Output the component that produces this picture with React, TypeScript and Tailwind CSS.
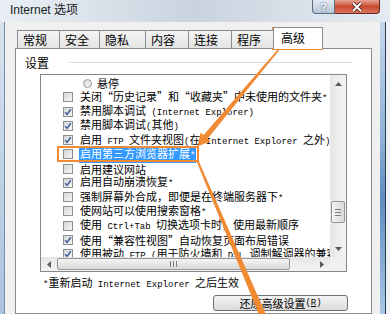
import React from "react";

type Row = { s: string; c?: boolean; radio?: boolean; sel?: boolean };

const rows: Row[] = [
  { s: "悬停", radio: true },
  { s: "关闭“历史记录”和“收藏夹”中未使用的文件夹*" },
  { s: "禁用脚本调试 (Internet Explorer)", c: true },
  { s: "禁用脚本调试(其他)", c: true },
  { s: "启用 FTP 文件夹视图(在 Internet Explorer 之外)", c: true },
  { s: "启用第三方浏览器扩展*", sel: true },
  { s: "启用建议网站" },
  { s: "启用自动崩溃恢复*", c: true },
  { s: "强制屏幕外合成，即便是在终端服务器下*" },
  { s: "使网站可以使用搜索窗格*" },
  { s: "使用 Ctrl+Tab 切换选项卡时，使用最新顺序" },
  { s: "使用“兼容性视图”自动恢复页面布局错误", c: true },
  { s: "使用被动 FTP (用于防火墙和 DSL 调制解调器的兼容性)", c: true },
];

const tabs = [
  { t: "常规", w: "w-[43px]" },
  { t: "安全", w: "w-[41px]" },
  { t: "隐私", w: "w-[47px]" },
  { t: "内容", w: "w-[44px]" },
  { t: "连接", w: "w-[44px]" },
  { t: "程序", w: "w-[43px]" },
];

// ascii runs get the narrow mono face, like SimSun's half-width latin
function T({ s }: { s: string }) {
  const parts = s.split(/([\x20-\x7e]+)/);
  return (
    <>
      {parts.map((p, i) =>
        /^[\x20-\x7e]+$/.test(p) ? (
          <span key={i} className="font-['Liberation_Mono',monospace] text-[9px] whitespace-pre">
            {p}
          </span>
        ) : (
          <React.Fragment key={i}>{p}</React.Fragment>
        )
      )}
    </>
  );
}

function Check({ on }: { on?: boolean }) {
  return (
    <span className="w-[10px] h-[10px] shrink-0 border border-[#8e8f8f] bg-gradient-to-br from-[#d4d6d9] to-[#f6f6f6] flex items-center justify-center">
      {on && (
        <svg width="8" height="8" viewBox="0 0 8 8">
          <path d="M1.2 4.2 L3.1 6.4 L6.8 1.2" stroke="#3e5d9e" strokeWidth="1.5" fill="none" />
        </svg>
      )}
    </span>
  );
}

function Tri({ dir }: { dir: "up" | "down" | "left" | "right" }) {
  const pts = {
    up: "0,4 3.5,0 7,4",
    down: "0,0 3.5,4 7,0",
    left: "4,0 0,3.5 4,7",
    right: "0,0 4,3.5 0,7",
  }[dir];
  const vert = dir === "up" || dir === "down";
  return (
    <svg width={vert ? 7 : 4} height={vert ? 4 : 7} viewBox={vert ? "0 0 7 4" : "0 0 4 7"}>
      <polygon points={pts} fill="#5a5a5a" />
    </svg>
  );
}

export default function App() {
  return (
    <div className="relative w-[390px] h-[314px] overflow-hidden flex flex-col bg-[#dce5ee] font-['Noto_Sans_CJK_SC',sans-serif] text-black">
      {/* title bar */}
      <div className="h-[22px] shrink-0 flex items-start pl-[10px] pr-[10px] bg-[linear-gradient(to_right,#e9eff5,#d6dfe8_30%,#c9d3de_50%,#d8e0e9_75%,#e3eaf1)]">
        <span className="mt-[3px] text-[12px] leading-[14px] font-['Liberation_Sans','Noto_Sans_CJK_SC',sans-serif] text-[#1b1b1b]">
          Internet 选项
        </span>
        <div className="flex-1" />
        <div className="w-[23px] h-[14px] border border-t-0 border-[#5b6e83] rounded-bl-[4px] bg-gradient-to-b from-[#e3eaf2] to-[#b5c5d6] flex items-center justify-center text-[11px] leading-[12px] font-bold text-white font-['Liberation_Sans',sans-serif] [text-shadow:0_0_2px_#1d3957]">
          ?
        </div>
        <div className="w-[45px] h-[14px] border border-t-0 border-l-0 border-[#6b2a20] rounded-br-[4px] bg-gradient-to-b from-[#e6a293] via-[#c9472f] to-[#da7560] flex items-center justify-center">
          <svg width="12" height="10" viewBox="0 0 12 10">
            <path d="M2 1 L10 9 M10 1 L2 9" stroke="#3a1510" strokeWidth="3.4" />
            <path d="M2 1 L10 9 M10 1 L2 9" stroke="#ffffff" strokeWidth="2" />
          </svg>
        </div>
      </div>

      <div className="flex flex-1 min-h-0">
        <div className="w-[4px] bg-gradient-to-b from-[#d7e3ef] to-[#a9c3de]" />
        <div className="w-px bg-[#7a8ea3]" />

        {/* client */}
        <div className="flex-1 bg-[#f0f0f0] pl-[10px] pr-[8px] pt-[5px] flex flex-col">
          <div className="h-[22px] -mb-px ml-[2px] flex items-end relative z-10 text-[12px]">
            {tabs.map((t) => (
              <div
                key={t.t}
                className={`${t.w} h-[18px] mb-px -mr-px border border-b-0 border-[#898c95] bg-gradient-to-b from-[#f4f4f4] to-[#e4e4e4] pl-[5px] leading-[17px]`}
              >
                {t.t}
              </div>
            ))}
            <div className="w-[50px] h-[22px] bg-white border border-b-0 border-[#898c95] pl-[7px] pt-[2px] leading-[16px]">
              高级
            </div>
          </div>

          <div className="flex-1 bg-white border border-[#898c95] flex flex-col">
            <div className="mt-[7px] ml-[9px] mr-[19px] h-[13px] flex items-center">
              <span className="text-[12px] leading-[13px]">设置</span>
              <div className="ml-[20px] flex-1 h-px bg-[#d5dfe5]" />
            </div>

            <div className="mt-[5px] ml-[24px] w-[307px] h-[198px] border border-[#828790] bg-white grid grid-cols-[1fr_16px] grid-rows-[1fr_14px]">
              <div className="overflow-hidden pt-px text-[11px]">
                {rows.map((r, i) => (
                  <div key={i} className="h-[14.25px] flex items-center whitespace-nowrap leading-[14px]">
                    {r.radio ? (
                      <>
                        <span className="ml-[42px] w-[9px] h-[9px] rounded-full border border-[#9a9a9a] bg-gradient-to-br from-[#d8d9db] to-[#f7f7f7]" />
                        <span className="ml-[5px]">
                          <T s={r.s} />
                        </span>
                      </>
                    ) : (
                      <>
                        <span className="ml-[22px]">
                          <Check on={r.c} />
                        </span>
                        <span className={r.sel ? "ml-[6px] px-px bg-[#3399ff] text-white" : "ml-[7px]"}>
                          <T s={r.s} />
                        </span>
                      </>
                    )}
                  </div>
                ))}
              </div>

              {/* vertical scrollbar */}
              <div className="flex flex-col bg-gradient-to-r from-[#e6e6e6] to-[#f4f4f4]">
                <div className="h-[17px] flex items-center justify-center">
                  <Tri dir="up" />
                </div>
                <div className="h-[109px]" />
                <div className="h-[22px] mx-px border border-[#979797] rounded-[2px] bg-gradient-to-r from-[#f4f4f4] to-[#d9d9d9] flex flex-col items-center justify-center gap-[2px]">
                  <div className="w-[6px] h-px bg-[#7d7d7d]" />
                  <div className="w-[6px] h-px bg-[#7d7d7d]" />
                  <div className="w-[6px] h-px bg-[#7d7d7d]" />
                </div>
                <div className="flex-1" />
                <div className="h-[17px] flex items-center justify-center">
                  <Tri dir="down" />
                </div>
              </div>

              {/* horizontal scrollbar */}
              <div className="flex bg-gradient-to-b from-[#e6e6e6] to-[#f4f4f4]">
                <div className="w-[16px] flex items-center justify-center">
                  <Tri dir="left" />
                </div>
                <div className="w-[233px] my-px border border-[#979797] rounded-[2px] bg-gradient-to-b from-[#f4f4f4] to-[#d9d9d9] flex items-center justify-center gap-[2px]">
                  <div className="w-px h-[6px] bg-[#7d7d7d]" />
                  <div className="w-px h-[6px] bg-[#7d7d7d]" />
                  <div className="w-px h-[6px] bg-[#7d7d7d]" />
                </div>
                <div className="flex-1" />
                <div className="w-[16px] flex items-center justify-center">
                  <Tri dir="right" />
                </div>
              </div>
              <div className="bg-[#f0f0f0]" />
            </div>

            <div className="mt-[4px] ml-[27px] text-[11px] leading-[12px]">
              <T s="*重新启动 Internet Explorer 之后生效" />
            </div>

            <div className="mt-[4px] self-end mr-[23px] w-[135px] h-[16px] border border-[#707070] rounded-[3px] bg-gradient-to-b from-[#f3f3f3] to-[#dcdcdc] flex items-center justify-center text-[11px] leading-[14px]">
              还原高级设置
              <span className="font-['Liberation_Mono',monospace] text-[9px]">
                (<span className="underline">R</span>)
              </span>
            </div>
          </div>
        </div>

        <div className="w-[5px] bg-[linear-gradient(to_bottom,#c3d7ec,#8fb2d8_40%,#5f8cc0_60%,#a9c7e6)]" />
        <div className="w-px bg-[#2d3b4a]" />
        <div className="w-[4px] bg-[#eef2f6]" />
      </div>

      {/* orange annotations */}
      <svg className="absolute top-0 left-0 pointer-events-none" width="390" height="314" viewBox="0 0 390 314">
        <rect x="273" y="28" width="49" height="21" fill="none" stroke="#f08a33" strokeWidth="2" />
        <rect x="58" y="147" width="140" height="14" fill="none" stroke="#f08a33" strokeWidth="2" />
        <polygon
          points="280.6,48.4 279.4,47.6 203.6,135 200.6,132.5 197.5,146.5 210.8,141 207.8,138.5"
          fill="#f08a33"
        />
        <polygon points="198,159.6 196.2,160.4 259.5,316 265.5,313.5" fill="#f08a33" />
      </svg>
    </div>
  );
}
